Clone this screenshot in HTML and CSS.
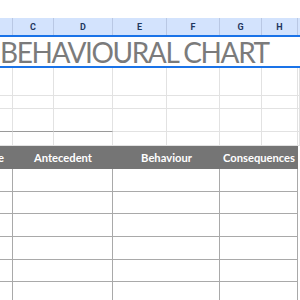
FILE: index.html
```html
<!DOCTYPE html>
<html>
<head>
<meta charset="utf-8">
<link rel="stylesheet" href="styles.css">
</head>
<body>
<div class="topbar"></div>
<div class="colheads">
  <div class="ch"></div>
  <div class="ch">C</div>
  <div class="ch">D</div>
  <div class="ch">E</div>
  <div class="ch">F</div>
  <div class="ch">G</div>
  <div class="ch">H</div>
  <div class="ch last"></div>
</div>
<div class="title"><span>BEHAVIOURAL CHART</span></div>
<div class="sheet">
  <div class="c"></div><div class="c"></div><div class="c"></div><div class="c"></div><div class="c"></div><div class="c"></div><div class="c"></div><div class="c"></div>
  <div class="c"></div><div class="c"></div><div class="c"></div><div class="c"></div><div class="c"></div><div class="c"></div><div class="c"></div><div class="c"></div>
  <div class="c dk"></div><div class="c dk"></div><div class="c dk"></div><div class="c"></div><div class="c"></div><div class="c"></div><div class="c"></div><div class="c"></div>
  <div class="c"></div><div class="c"></div><div class="c"></div><div class="c"></div><div class="c"></div><div class="c"></div><div class="c"></div><div class="c"></div>

  <div class="hd first"><span>Date</span></div>
  <div class="hd span2">Antecedent</div>
  <div class="hd span2">Behaviour</div>
  <div class="hd span2">Consequences</div>
  <div class="c blank"></div>

  <div class="d"></div><div class="d span2"></div><div class="d span2"></div><div class="d span2"></div><div class="c blank"></div>
  <div class="d"></div><div class="d span2"></div><div class="d span2"></div><div class="d span2"></div><div class="c blank"></div>
  <div class="d"></div><div class="d span2"></div><div class="d span2"></div><div class="d span2"></div><div class="c blank"></div>
  <div class="d"></div><div class="d span2"></div><div class="d span2"></div><div class="d span2"></div><div class="c blank"></div>
  <div class="d"></div><div class="d span2"></div><div class="d span2"></div><div class="d span2"></div><div class="c blank"></div>
  <div class="d"></div><div class="d span2"></div><div class="d span2"></div><div class="d span2"></div><div class="c blank"></div>
</div>
</body>
</html>
```
FILE: styles.css
```css
* { box-sizing: border-box; }
html, body { margin: 0; padding: 0; background: #fff; }
body { width: 300px; height: 300px; overflow: hidden; font-family: Roboto, "Liberation Sans", sans-serif; }

.topbar { height: 18px; background: #fff; }

.colheads {
  display: grid;
  grid-template-columns: 13px 41px 59px 54px 53px 42px 36px 2px;
  height: 17px;
  background: #d3e3fd;
}
.ch {
  border-right: 1px solid #b9c8e4;
  display: flex;
  align-items: center;
  justify-content: center;
  font-size: 9px;
  font-weight: bold;
  color: #1f3760;
  padding-top: 1px;
}
.ch.last { border-right: none; }

.title {
  height: 33px;
  border-top: 2px solid #1a73e8;
  border-bottom: 2px solid #1a73e8;
  display: flex;
  align-items: center;
  padding-left: 0;
  white-space: nowrap;
  overflow: hidden;
}
.title span {
  font-family: Lato, "Open Sans", sans-serif;
  font-size: 28px;
  letter-spacing: -1.4px;
  color: #7b7b7b;
  line-height: 1;
}

.sheet {
  display: grid;
  grid-template-columns: 13px 41px 59px 54px 53px 42px 36px 2px;
  grid-template-rows: 28px 13px 23px 14px 23px 23px 22px 23px 23px 22px 23px;
}
.c {
  border-right: 1px solid #e2e2e2;
  border-bottom: 1px solid #e2e2e2;
}
.c.dk { border-bottom-color: #9a9a9a; }
.c.blank { border-right: none; border-bottom: none; }

.span2 { grid-column: span 2; }

.hd {
  background: #757575;
  color: #fff;
  font-family: Lato, "Open Sans", sans-serif;
  font-weight: bold;
  font-size: 11.2px;
  display: flex;
  align-items: center;
  justify-content: center;
  white-space: nowrap;
}
.hd.first {
  justify-content: flex-end;
  overflow: hidden;
  padding-right: 9px;
}

.d {
  border-right: 1px solid #a9a9a9;
  border-bottom: 1px solid #a9a9a9;
}
```
